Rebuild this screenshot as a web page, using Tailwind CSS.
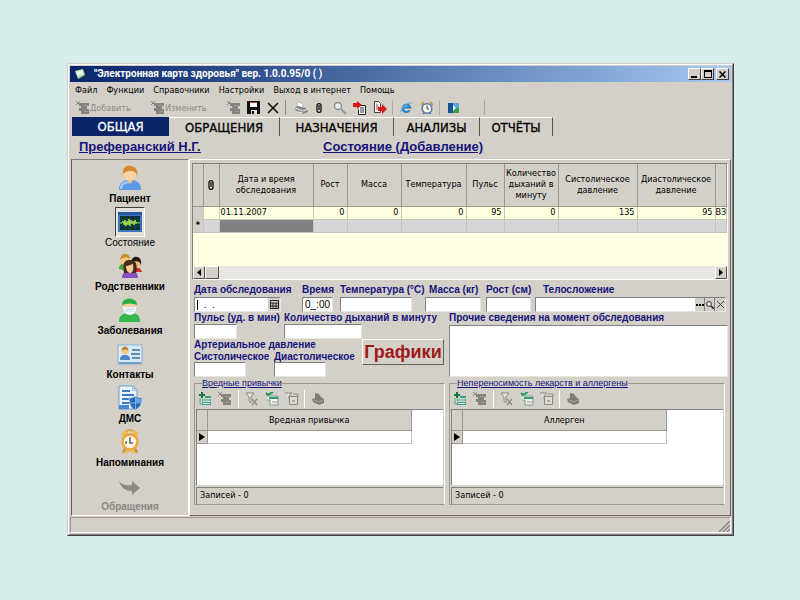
<!DOCTYPE html>
<html lang="ru">
<head>
<meta charset="utf-8">
<title>Электронная карта здоровья</title>
<script src="https://cdn.jsdelivr.net/npm/@tailwindcss/browser@4"></script>
</head>
<body class="min-h-screen bg-[#d9ecec] pt-[63px] pr-[66px] pb-16 pl-[67px] font-['DejaVu_Sans_Condensed','DejaVu_Sans',sans-serif] text-[10px] leading-[12px] text-black">

<svg class="hidden" aria-hidden="true">
  <symbol id="stamp" viewBox="0 0 14 14"><path d="M0 0l4 4M4 0L0 4" stroke="#8a8883"/><path d="M3 2h10v3h-2v3h2v5H5v-3H3V7h2V5H3z" fill="#858380"/><path d="M7 4.500h4M8 10.500h4" stroke="#aaa7a0" stroke-width=".7"/></symbol>
  <symbol id="addrow" viewBox="0 0 14 14"><path d="M1 3h6M4 0v6" stroke="#0b7a3a" stroke-width="2"/><path d="M7 4h6v2H7zM4 7h9v2H4zM4 10h9v3H4z" fill="#3aa08c"/><path d="M5 8h7M5 11.500h7" stroke="#d8f0e8"/><path d="M2 6v6h2" stroke="#5a8" fill="none"/></symbol>
  <symbol id="funnelx" viewBox="0 0 14 14"><path d="M1 1h8L6 5v6L4 9V5z" fill="#e8e6e0" stroke="#8a8883"/><path d="M7 7l5 6M12 7l-5 6" stroke="#8a8883" stroke-width="1.300"/></symbol>
  <symbol id="funnelok" viewBox="0 0 14 14"><path d="M1 1l2 2 5-3" stroke="#1b9a5a" stroke-width="2" fill="none"/><path d="M3 4h10v9H5V8H2" fill="#f0efec" stroke="#7a9a90"/><path d="M4 5h9v2H4z" fill="#2f9a78"/><path d="M7 10h5" stroke="#999"/></symbol>
  <symbol id="funnelwin" viewBox="0 0 14 14"><path d="M0 1h7L4 4v3" fill="#ddd" stroke="#8a8883"/><path d="M4.500 4.500h8v8h-8z" fill="#dedbd5" stroke="#8a8883"/><path d="M8 2h5v3" fill="none" stroke="#8a8883"/><path d="M7 8h3v2H7z" fill="#aaa"/></symbol>
  <symbol id="print" viewBox="0 0 14 14"><path d="M4 1l4 1 2 3 3 2v4l-5 2-6-3-1-3 3-1z" fill="#7f7d79"/><path d="M3 8l5 2 4-2" stroke="#aaa7a0" fill="none"/></symbol>
  <symbol id="clip" viewBox="0 0 8 12"><path d="M2 3.500C2 1 6 1 6 3.500v5C6 11 2 11 2 8.500z M4 3v5" fill="none" stroke="#111" stroke-width="1.300"/></symbol>
</svg>

<main class="border border-t-[#d4d0c8] border-l-[#d4d0c8] border-r-[#404040] border-b-[#404040] bg-[#d4d0c8]">
<div class="border border-t-white border-l-white border-r-[#808080] border-b-[#808080] p-px">

  <!-- Title bar -->
  <header class="flex h-4 items-center bg-linear-to-r from-[#0a246a] to-[#a6caf0] pr-[2px] pl-1">
    <svg class="size-3" viewBox="0 0 12 12"><path d="M1 3l8-2 2 6-7 4z" fill="#b8e0b0"/><path d="M2 4l6-2 1 4-5 2z" fill="#e8f8e0"/><path d="M4 11l7-4" stroke="#5b8f62"/></svg>
    <h1 class="ml-2 flex-1 font-[Roboto,sans-serif] text-[10px] font-bold whitespace-nowrap text-white">"Электронная карта здоровья" вер. 1.0.0.95/0 ( )</h1>
    <button aria-label="Свернуть" class="flex h-3 w-[13px] items-end border border-t-white border-l-white border-r-[#404040] border-b-[#404040] bg-[#d4d0c8] pb-px pl-[2px]"><span class="h-[2px] w-[6px] bg-black"></span></button>
    <button aria-label="Развернуть" class="flex h-3 w-[13px] items-center justify-center border border-t-white border-l-white border-r-[#404040] border-b-[#404040] bg-[#d4d0c8]"><span class="h-2 w-2 border border-t-2 border-black"></span></button>
    <button aria-label="Закрыть" class="ml-[2px] flex h-3 w-[13px] items-center justify-center border border-t-white border-l-white border-r-[#404040] border-b-[#404040] bg-[#d4d0c8]"><svg class="size-[7px]" viewBox="0 0 7 7"><path d="M.5.5l6 6M6.500.5l-6 6" stroke="#000" stroke-width="1.500"/></svg></button>
  </header>

  <!-- Menu -->
  <nav class="flex h-4 items-center gap-[9px] pl-[5px] text-[9px] whitespace-nowrap">
    <a href="#">Файл</a><a href="#">Функции</a><a href="#">Справочники</a><a href="#">Настройки</a><a href="#">Выход в интернет</a><a href="#">Помощь</a>
  </nav>

  <!-- Toolbar -->
  <div class="flex h-[19px] items-center pl-[6px] text-[9px] whitespace-nowrap text-[#8c8a85]">
    <button class="flex w-[75px] items-center"><svg class="size-[14px]"><use href="#stamp"/></svg><span>Добавить</span></button>
    <button class="flex w-[76px] items-center"><svg class="size-[14px]"><use href="#stamp"/></svg><span>Изменить</span></button>
    <button aria-label="Удалить" class="w-5"><svg class="size-[14px]"><use href="#stamp"/></svg></button>
    <button aria-label="Сохранить" class="w-5"><svg class="size-[13px]" viewBox="0 0 13 13"><path d="M0 0h13v13H0z" fill="#111"/><path d="M3 1h7v5H3z" fill="#fff"/><path d="M3 1h7v1H3z" fill="#c33"/><path d="M4 9h6v4H4z" fill="#ddd"/><path d="M5 10h2v3H5z" fill="#111"/></svg></button>
    <button aria-label="Отменить" class="w-[18px]"><svg class="size-3" viewBox="0 0 12 12"><path d="M1 1l10 10M11 1L1 11" stroke="#111" stroke-width="1.600"/></svg></button>
    <span class="mr-2 h-[15px] w-px bg-[#908e88]"></span>
    <button aria-label="Печать" class="w-[21px]"><svg class="size-[14px]" viewBox="0 0 14 14"><path d="M4 1l5 2-1 4-5-2z" fill="#fff" stroke="#999" stroke-width=".5"/><path d="M1 6l3-1 8 2 2 2v2l-5 2-8-4z" fill="#8c8c90"/><path d="M1 7l8 3 5-2" stroke="#e8e8e8" fill="none"/><path d="M4 11l5 1" stroke="#e8e8a0"/></svg></button>
    <button aria-label="Вложение" class="w-[18px]"><svg class="h-3 w-2"><use href="#clip"/></svg></button>
    <button aria-label="Поиск" class="w-5"><svg class="size-[14px]" viewBox="0 0 14 14"><circle cx="5" cy="5" r="3.500" fill="#e4eef0" stroke="#8c8c8c" stroke-width="1.300"/><path d="M8 8l5 5" stroke="#9a958a" stroke-width="2"/></svg></button>
    <button aria-label="Импорт" class="w-5"><svg class="size-[14px]" viewBox="0 0 14 14"><path d="M6.500 4.500h6v9h-7v-5" fill="#fff" stroke="#222"/><path d="M7 7h4M7 9h4M7 11h4" stroke="#333"/><path d="M0 2h4V0l5 4-5 4V6H0z" fill="#d41a1a"/></svg></button>
    <button aria-label="Экспорт" class="w-[19px]"><svg class="size-[14px]" viewBox="0 0 14 14"><path d="M1.500.5h4l2 2v9h-6z" fill="#fff" stroke="#444"/><path d="M3 4h2M3 6h3M3 8h3" stroke="#a33"/><path d="M5 6h4V3l5 5-5 5v-3H5z" fill="#d41a1a"/></svg></button>
    <span class="mr-[7px] h-[15px] w-px bg-[#b0ada6]"></span>
    <button aria-label="Браузер" class="w-5"><svg class="size-[13px]" viewBox="0 0 14 14"><path d="M10.500 10C8 13 3 12 3 8s6-6 8-1H4" fill="none" stroke="#2a7fc0" stroke-width="2.200"/><path d="M1 12C0 8 8 1 13 2" fill="none" stroke="#6ab4e4" stroke-width="1.200"/></svg></button>
    <button aria-label="Напоминание" class="w-[19px]"><svg class="size-[14px]" viewBox="0 0 14 14"><circle cx="7" cy="7.500" r="4.800" fill="#fffbe8" stroke="#5878b8" stroke-width="1.600"/><path d="M1 4l3-3M13 4l-3-3" stroke="#c89a40" stroke-width="1.800"/><path d="M7 4.500V8h2" fill="none" stroke="#444"/><path d="M3 13l1-1M11 13l-1-1" stroke="#555"/></svg></button>
    <span class="mr-2 h-[15px] w-px bg-[#b0ada6]"></span>
    <button aria-label="Выход" class="w-9"><svg class="size-3" viewBox="0 0 12 12"><path d="M0 1h6v10H0z" fill="#1a4f90"/><path d="M5 1h6v5H5z" fill="#58a8e8"/><path d="M5 6h6v5H5z" fill="#3b9a4a"/><path d="M5 3l3 3-3 3z" fill="#e8f4ff"/></svg></button>
    <span class="h-[15px] w-px bg-[#a8a59e]"></span>
  </div>

  <!-- Tabs -->
  <div role="tablist" class="flex h-[19px] pl-[2px] text-[13px] leading-[17px] whitespace-nowrap [-webkit-text-stroke:.3px]">
    <button role="tab" aria-selected="true" class="w-[97px] bg-[#0a246a] text-white">ОБЩАЯ</button>
    <button role="tab" class="w-[111px] border-t border-r border-t-white border-r-[#555]">ОБРАЩЕНИЯ</button>
    <button role="tab" class="w-[114px] border-t border-r border-t-white border-r-[#555]">НАЗНАЧЕНИЯ</button>
    <button role="tab" class="w-[86px] border-t border-r border-t-white border-r-[#555]">АНАЛИЗЫ</button>
    <button role="tab" class="w-[73px] border-t border-r border-t-white border-r-[#555]">ОТЧЁТЫ</button>
  </div>

  <!-- Patient and mode -->
  <div class="flex h-[23px] pl-[9px] font-['Liberation_Sans',sans-serif] text-[13px] leading-[22px] font-bold whitespace-nowrap text-[#14147c] underline">
    <a href="#" class="w-[244px]">Преферанский Н.Г.</a>
    <a href="#">Состояние (Добавление)</a>
  </div>

  <div class="flex">
    <!-- Sidebar -->
    <nav class="ml-px flex w-[118px] shrink-0 flex-col border border-t-[#808080] border-l-[#606060] border-r-white border-b-white pt-[3px] text-center font-['Liberation_Sans',sans-serif] text-[10px] leading-[11px] font-bold">
      <a href="#" class="flex h-11 flex-col items-center"><span class="flex h-[30px] items-center"><svg class="size-[26px]" viewBox="0 0 26 26"><path d="M2 25c0-7 4-10 11-10s11 3 11 10z" fill="#5b9ae6"/><path d="M4 24c0-5 3-7 9-7" stroke="#a8ccf6" fill="none" stroke-width="2"/><path d="M9 14l4 5 4-5z" fill="#f5c890"/><circle cx="13" cy="9" r="6.500" fill="#f9d5a2"/><path d="M6 9C5 2 10 0 14 1c6 1 7 6 6 10-1-4-3-5-6-5-3 0-5 0-8 3z" fill="#d88a2e"/></svg></span>Пациент</a>
      <a href="#" class="flex h-11 flex-col items-center font-normal"><span class="flex h-[30px] w-[30px] items-center justify-center border border-t-[#404040] border-l-[#404040] border-r-white border-b-white bg-[#e4e2dd]"><svg class="size-6" viewBox="0 0 24 24"><path d="M0 2h24v20H0z" fill="#3b76c0"/><path d="M0 2h24v3H0z" fill="#2858a0"/><path d="M2 6h20v14H2z" fill="#0c3034"/><path d="M2 10h20M2 16h20M7 6v14M12 6v14M17 6v14" stroke="#1f5a50" stroke-width=".6"/><path d="M2 13h2l1-2 1 4 1-5 1 6 1-5 1 4 1-6 1 7 1-6 1 4 1-3 1 4 1-5 1 4 1-2 1 1h2" fill="none" stroke="#a8e050"/></svg></span>Состояние</a>
      <a href="#" class="flex h-11 flex-col items-center"><span class="flex h-[30px] items-center"><svg class="size-[26px]" viewBox="0 0 26 26"><path d="M2 16c0-5 3-6 8-6v8z" fill="#4da83c"/><circle cx="8" cy="7" r="5" fill="#f4c880"/><path d="M3 7c0-8 10-8 10-1-4-2-7-2-10 1z" fill="#c8902c"/><path d="M16 19c0-6 8-5 9 0z" fill="#d42c2c"/><circle cx="19" cy="10" r="5" fill="#eebc80"/><path d="M14 10c0-9 12-8 10 2-1-4-5-5-10-2z" fill="#241a18"/><path d="M5 25c0-5 3-7 8-7s8 2 8 7z" fill="#8a4fc0"/><path d="M7 20c-2-11 1-13 6-13s8 3 6 13z" fill="#4a2a1a"/><path d="M9 13c3 0 6-2 7-2 1 7-1 9-3 9s-4-3-4-7z" fill="#f6cd98"/></svg></span>Родственники</a>
      <a href="#" class="flex h-11 flex-col items-center"><span class="flex h-[30px] items-center"><svg class="size-[26px]" viewBox="0 0 26 26"><path d="M2 25c0-7 4-9 11-9s10 2 10 9z" fill="#35b84c"/><circle cx="12.500" cy="10" r="7" fill="#f5cda0"/><path d="M5 8c0-9 15-9 15 0-5-2-10-2-15 0z" fill="#2cae40"/><path d="M7 3c3-2 8-2 10 0" stroke="#86e08c" fill="none"/><path d="M6 10h13c0 5-2 8-6 8s-7-3-7-8z" fill="#eef8fa"/><path d="M8 12h9M8 14h9" stroke="#c0dce0"/></svg></span>Заболевания</a>
      <a href="#" class="flex h-11 flex-col items-center"><span class="flex h-[30px] items-center"><svg class="size-[26px]" viewBox="0 0 26 26"><path d="M1 4h24v19H1z" fill="#d8ecf8" stroke="#8ab0cc"/><path d="M2 21h22v2H2z" fill="#70a0c8"/><circle cx="8" cy="10" r="3.500" fill="#f2c78c"/><path d="M4.500 10c0-6 7-6 7 0-2-2-5-2-7 0z" fill="#c07c28"/><path d="M3 19c0-4 2-5 5-5s5 1 5 5z" fill="#4a86d0"/><path d="M15 9h8M14 13h9M15 17h8" stroke="#40709c" stroke-width="1.500"/></svg></span>Контакты</a>
      <a href="#" class="flex h-11 flex-col items-center"><span class="flex h-[30px] items-center"><svg class="size-[26px]" viewBox="0 0 26 26"><path d="M2 1h14l4 4v19H2z" fill="#eef6fd" stroke="#6a9ad4"/><path d="M15 1v5h5z" fill="#a8c8ec"/><path d="M5 6h8M5 10h12M5 14h10M5 18h8" stroke="#3a78c8" stroke-width="2"/><path d="M2 20h10v4H2z" fill="#4a88d0"/><path d="M12 13c3 0 5-1 6-2 2 1 4 2 7 2 0 6-2 10-7 12-4-2-6-6-6-12z" fill="#2a68b8" stroke="#c0d4e8" stroke-width=".8"/><path d="M18.500 12v12M13 18h11" stroke="#7ab4f0"/><path d="M19 12.500c2 1 3 1.500 5 1.500 0 1 0 2-.5 3.500H19z" fill="#5fa4ee"/></svg></span>ДМС</a>
      <a href="#" class="flex h-11 flex-col items-center"><span class="flex h-[30px] items-center"><svg class="size-[26px]" viewBox="0 0 26 26"><path d="M9 4c0-4 8-4 8 0" stroke="#e0a848" fill="none" stroke-width="2"/><circle cx="8" cy="5" r="3" fill="#f0b850"/><circle cx="18" cy="5" r="3" fill="#f0b850"/><path d="M8 20l-2 4M18 20l2 4" stroke="#c08828" stroke-width="2.500"/><circle cx="13" cy="13" r="7.500" fill="#fdf4e0" stroke="#eda63c" stroke-width="2.500"/><path d="M13 8v6h3M9 12v3" stroke="#5a6a6a" fill="none" stroke-width="1.500"/><path d="M6 24c4-2 10-2 14 0" fill="none" stroke="#e8b860" stroke-width="2"/></svg></span>Напоминания</a>
      <a href="#" class="flex h-11 flex-col items-center text-[#8a8883]"><span class="flex h-[30px] items-center"><svg class="size-[26px]" viewBox="0 0 26 26"><path d="M2 8c3 4 7 5 13 4V8l8 7-8 7v-4C9 18 4 15 2 8z" fill="#8c8a86"/></svg></span>Обращения</a>
    </nav>

    <!-- Content -->
    <section class="flex min-w-0 flex-1 flex-col border border-t-white border-l-white border-r-[#705f60] border-b-[#705f60] px-[2px] pt-[3px]">
      <!-- Examinations -->
      <div class="flex h-[117px] flex-col overflow-hidden border border-t-[#808080] border-l-[#808080] border-r-white border-b-white bg-[#ffffe1]">
        <table class="w-full table-fixed border-collapse text-[9px] leading-[11px]">
          <colgroup><col class="w-[10px]"><col class="w-4"><col class="w-[94px]"><col class="w-[34px]"><col class="w-[54px]"><col class="w-[65px]"><col class="w-[38px]"><col class="w-[54px]"><col class="w-[79px]"><col class="w-[78px]"><col></colgroup>
          <thead>
            <tr class="h-[42px] bg-[#d4d0c8] [&>th]:border-r [&>th]:border-b [&>th]:border-[#9a9890] [&>th]:p-0 [&>th]:font-normal">
              <th></th><th><svg class="mx-auto h-3 w-2"><use href="#clip"/></svg></th><th>Дата и время<br>обследования</th><th>Рост</th><th>Масса</th><th>Температура</th><th>Пульс</th><th>Количество<br>дыханий в<br>минуту</th><th>Систолическое<br>давление</th><th>Диастолическое<br>давление</th><th></th>
            </tr>
          </thead>
          <tbody>
            <tr class="h-[13px] text-right [&>td]:border-r [&>td]:border-b [&>td]:border-[#c8c8b8] [&>td]:py-0">
              <td class="bg-[#d4d0c8]"></td><td></td><td class="pl-px text-left">01.11.2007</td><td class="pr-[2px]">0</td><td class="pr-[2px]">0</td><td class="pr-[2px]">0</td><td class="pr-[2px]">95</td><td class="pr-[2px]">0</td><td class="pr-[2px]">135</td><td class="pr-[2px]">95</td><td class="px-0 text-left whitespace-nowrap">ВЗ</td>
            </tr>
            <tr class="h-[13px] bg-[#d6d6d6] [&>td]:border-r [&>td]:border-b [&>td]:border-[#c4c4c4] [&>td]:p-0">
              <td class="bg-[#d4d0c8] text-center leading-[9px] font-bold">*</td><td></td><td class="bg-[#808080]"></td><td></td><td></td><td></td><td></td><td></td><td></td><td></td><td></td>
            </tr>
          </tbody>
        </table>
        <div class="mt-auto flex h-[13px] justify-between bg-[#e9e7e3]">
          <div class="flex">
            <button aria-label="Влево" class="flex w-3 items-center justify-center border border-t-white border-l-white border-r-[#505050] border-b-[#505050] bg-[#d4d0c8]"><svg class="h-[7px] w-1" viewBox="0 0 4 7"><path d="M4 0v7L0 3.500z"/></svg></button>
            <span class="w-[14px] border border-t-white border-l-white border-r-[#505050] border-b-[#505050] bg-[#d4d0c8]"></span>
          </div>
          <button aria-label="Вправо" class="flex w-3 items-center justify-center border border-t-white border-l-white border-r-[#505050] border-b-[#505050] bg-[#d4d0c8]"><svg class="h-[7px] w-1" viewBox="0 0 4 7"><path d="M0 0v7l4-3.500z"/></svg></button>
        </div>
      </div>

      <!-- Measurements -->
      <form class="mt-1 pl-[2px] font-['Liberation_Sans',sans-serif] text-[10px] leading-[12px] font-bold whitespace-nowrap text-[#14147c]">
        <div class="grid grid-cols-[108px_38px_85px_61px_49px_1fr]">
          <div><label for="date" class="block h-[13px]">Дата обследования</label>
            <div class="flex h-[15px] w-[87px] items-center border border-t-[#808080] border-l-[#808080] border-r-[#e8e6e0] border-b-[#e8e6e0] bg-white pl-[2px]"><span class="h-[10px] w-px bg-black"></span><input id="date" value=" .  ." class="min-w-0 flex-1 pl-[3px] font-normal text-black"><button type="button" aria-label="Календарь" class="flex h-[13px] w-3 items-center justify-center bg-[#d4d0c8]"><svg class="size-[9px]" viewBox="0 0 9 9"><path d="M.5.5h8v8h-8zM0 3h9M3 3v6M6 3v6M0 6h9" fill="none" stroke="#222"/></svg></button></div></div>
          <div><label for="time" class="block h-[13px]">Время</label><input id="time" value="0_:00" class="block h-[15px] w-[31px] border border-t-[#808080] border-l-[#808080] border-r-[#e8e6e0] border-b-[#e8e6e0] bg-white pl-[2px] font-normal text-black"></div>
          <div><label for="temp" class="block h-[13px]">Температура (°C)</label><input id="temp" class="block h-[15px] w-[72px] border border-t-[#808080] border-l-[#808080] border-r-[#e8e6e0] border-b-[#e8e6e0] bg-white"></div>
          <div><label for="mass" class="block h-[13px] pl-1">Масса (кг)</label><input id="mass" class="block h-[15px] w-14 border border-t-[#808080] border-l-[#808080] border-r-[#e8e6e0] border-b-[#e8e6e0] bg-white"></div>
          <div><label for="height" class="block h-[13px]">Рост (см)</label><input id="height" class="block h-[15px] w-[45px] border border-t-[#808080] border-l-[#808080] border-r-[#e8e6e0] border-b-[#e8e6e0] bg-white"></div>
          <div><label for="build" class="block h-[13px] pl-2">Телосложение</label>
            <div class="mr-[2px] flex h-[15px] border border-t-[#808080] border-l-[#808080] border-r-[#e8e6e0] border-b-[#e8e6e0] bg-white"><input id="build" class="min-w-0 flex-1">
              <button type="button" aria-label="Выбрать" class="flex w-[10px] items-center justify-center border-r border-[#808080] bg-[#d4d0c8]"><svg class="h-[2px] w-2" viewBox="0 0 8 2"><path d="M0 0h2v2H0zM3 0h2v2H3zM6 0h2v2H6z"/></svg></button>
              <button type="button" aria-label="Найти" class="flex w-[10px] items-center justify-center border-r border-[#808080] bg-[#d4d0c8]"><svg class="size-2" viewBox="0 0 8 8"><circle cx="3" cy="3" r="2.400" fill="#fff" stroke="#222"/><path d="M5 5l3 3" stroke="#222" stroke-width="1.600"/></svg></button>
              <button type="button" aria-label="Очистить" class="flex w-[10px] items-center justify-center bg-[#d4d0c8]"><svg class="size-[7px]" viewBox="0 0 7 7"><path d="M0 0l7 7M7 0L0 7" stroke="#444"/></svg></button>
            </div></div>
        </div>
        <div class="grid grid-cols-[255px_1fr]">
          <div>
            <div class="grid grid-cols-[90px_1fr]">
              <div><label for="pulse" class="block h-3">Пульс (уд. в мин)</label><input id="pulse" class="block h-[15px] w-[43px] border border-t-[#808080] border-l-[#808080] border-r-[#e8e6e0] border-b-[#e8e6e0] bg-white"></div>
              <div><label for="breath" class="block h-3">Количество дыханий в минуту</label><input id="breath" class="block h-[15px] w-[78px] border border-t-[#808080] border-l-[#808080] border-r-[#e8e6e0] border-b-[#e8e6e0] bg-white"></div>
            </div>
            <div class="flex h-[38px] items-start">
              <div class="w-[168px]">
                <div class="h-3">Артериальное давление</div>
                <div class="grid grid-cols-[80px_1fr]">
                  <div><label for="sys" class="block h-[11px]">Систолическое</label><input id="sys" class="block h-[15px] w-[52px] border border-t-[#808080] border-l-[#808080] border-r-[#e8e6e0] border-b-[#e8e6e0] bg-white"></div>
                  <div><label for="dia" class="block h-[11px]">Диастолическое</label><input id="dia" class="block h-[15px] w-[52px] border border-t-[#808080] border-l-[#808080] border-r-[#e8e6e0] border-b-[#e8e6e0] bg-white"></div>
                </div>
              </div>
              <button type="button" class="h-[26px] w-[82px] border border-t-white border-l-white border-r-[#606060] border-b-[#606060] bg-[#d4d0c8] text-[18px] leading-6 text-[#a01818]">Графики</button>
            </div>
          </div>
          <div class="flex flex-col"><label for="other" class="block h-[13px]">Прочие сведения на момент обследования</label><textarea id="other" class="block w-full flex-1 resize-none border border-t-[#808080] border-l-[#808080] border-r-[#e8e6e0] border-b-[#e8e6e0] bg-white"></textarea></div>
        </div>
      </form>

      <!-- Habits and allergies -->
      <div class="grid grid-cols-[251px_1fr] gap-1 pr-[3px] pl-[2px]">
        <fieldset class="min-w-0 border border-[#9a9890] border-r-white px-px">
          <legend class="ml-[6px] font-['Liberation_Sans',sans-serif] text-[9px] leading-[12px] text-[#14147c] underline">Вредные привычки</legend>
          <div class="flex h-5 items-center gap-[6px] pl-[2px]">
            <button aria-label="Добавить"><svg class="block size-[14px]"><use href="#addrow"/></svg></button><button aria-label="Изменить"><svg class="block size-[14px]"><use href="#stamp"/></svg></button><span class="h-[18px] w-px bg-white"></span><button aria-label="Сбросить фильтр"><svg class="block size-[14px]"><use href="#funnelx"/></svg></button><button aria-label="Фильтр"><svg class="block size-[14px]"><use href="#funnelok"/></svg></button><button aria-label="Настроить фильтр"><svg class="block size-[14px]"><use href="#funnelwin"/></svg></button><span class="-ml-px h-[18px] w-px bg-white"></span><button aria-label="Печать"><svg class="block size-[14px]"><use href="#print"/></svg></button>
          </div>
          <div class="h-[76px] border-t border-l border-[#808080] bg-white">
            <table class="w-[215px] table-fixed border-collapse text-[9px]">
              <colgroup><col class="w-[10px]"><col></colgroup>
              <thead><tr class="h-5 bg-[#d4d0c8]"><th class="border-r border-b border-[#9a9890] p-0"></th><th class="border-r border-b border-[#9a9890] p-0 font-normal">Вредная привычка</th></tr></thead>
              <tbody><tr class="h-[13px]"><td class="border-r border-b border-[#9a9890] bg-[#d4d0c8] p-0"><svg class="ml-[2px] h-2 w-[6px]" viewBox="0 0 6 8"><path d="M0 0v8l6-4z"/></svg></td><td class="border-r border-b border-[#c0c0c0] p-0"></td></tr></tbody>
            </table>
          </div>
          <div class="mt-[2px] h-[17px] border-t border-l border-[#808080] pl-[3px] text-[9px] leading-[15px]">Записей - 0</div>
        </fieldset>
        <fieldset class="min-w-0 border border-[#9a9890] border-r-white px-px">
          <legend class="ml-[6px] font-['Liberation_Sans',sans-serif] text-[9px] leading-[12px] text-[#14147c] underline">Непереносимость лекарств и аллергены</legend>
          <div class="flex h-5 items-center gap-[6px] pl-[2px]">
            <button aria-label="Добавить"><svg class="block size-[14px]"><use href="#addrow"/></svg></button><button aria-label="Изменить"><svg class="block size-[14px]"><use href="#stamp"/></svg></button><span class="h-[18px] w-px bg-white"></span><button aria-label="Сбросить фильтр"><svg class="block size-[14px]"><use href="#funnelx"/></svg></button><button aria-label="Фильтр"><svg class="block size-[14px]"><use href="#funnelok"/></svg></button><button aria-label="Настроить фильтр"><svg class="block size-[14px]"><use href="#funnelwin"/></svg></button><span class="-ml-px h-[18px] w-px bg-white"></span><button aria-label="Печать"><svg class="block size-[14px]"><use href="#print"/></svg></button>
          </div>
          <div class="h-[76px] border-t border-l border-[#808080] bg-white">
            <table class="w-[215px] table-fixed border-collapse text-[9px]">
              <colgroup><col class="w-[10px]"><col></colgroup>
              <thead><tr class="h-5 bg-[#d4d0c8]"><th class="border-r border-b border-[#9a9890] p-0"></th><th class="border-r border-b border-[#9a9890] p-0 font-normal">Аллерген</th></tr></thead>
              <tbody><tr class="h-[13px]"><td class="border-r border-b border-[#9a9890] bg-[#d4d0c8] p-0"><svg class="ml-[2px] h-2 w-[6px]" viewBox="0 0 6 8"><path d="M0 0v8l6-4z"/></svg></td><td class="border-r border-b border-[#c0c0c0] p-0"></td></tr></tbody>
            </table>
          </div>
          <div class="mt-[2px] h-[17px] border-t border-l border-[#808080] pl-[3px] text-[9px] leading-[15px]">Записей - 0</div>
        </fieldset>
      </div>
    </section>
  </div>

  <!-- Status bar -->
  <footer class="mt-px flex h-4 items-end justify-end border border-t-[#a09090] border-l-[#a09090] border-r-white border-b-white">
    <svg class="size-3" viewBox="0 0 12 12"><path d="M1 12L12 1M5 12l7-7M9 12l3-3" stroke="#808080" stroke-width="1.300"/></svg>
  </footer>
</div>
</main>
</body>
</html>
